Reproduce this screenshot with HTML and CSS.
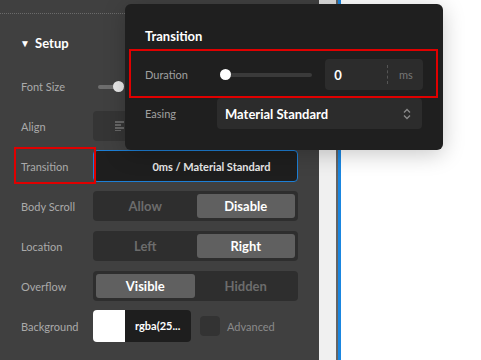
FILE: index.html
```html
<!DOCTYPE html>
<html lang="en">
  <head>
    <meta charset="UTF-8" />
    <title>Transition settings</title>
    <link rel="stylesheet" href="styles.css">
  </head>
  <body>
    <div class="stage">
      <aside class="panel">
        <div class="dots"></div>
        <div class="section-title"><span class="caret">&#9660;</span> Setup</div>

        <div class="row">
          <div class="label">Font Size</div>
          <div class="control">
            <div class="mini-slider"><span class="mini-track"></span><span class="mini-thumb"></span></div>
          </div>
        </div>

        <div class="row">
          <div class="label">Align</div>
          <div class="control box">
            <svg class="align-icon" width="10" height="10" viewBox="0 0 10 10">
              <path d="M0 1h9M0 4h6M0 7h9M0 10h6" stroke="#9a9a9a" stroke-width="1.2" fill="none"/>
            </svg>
          </div>
        </div>

        <div class="row">
          <div class="label">Transition</div>
          <div class="control field">0ms / Material Standard</div>
        </div>

        <div class="row">
          <div class="label">Body Scroll</div>
          <div class="control seg">
            <span class="opt">Allow</span>
            <span class="opt on">Disable</span>
          </div>
        </div>

        <div class="row">
          <div class="label">Location</div>
          <div class="control seg">
            <span class="opt">Left</span>
            <span class="opt on">Right</span>
          </div>
        </div>

        <div class="row">
          <div class="label">Overflow</div>
          <div class="control seg">
            <span class="opt on">Visible</span>
            <span class="opt">Hidden</span>
          </div>
        </div>

        <div class="row">
          <div class="label">Background</div>
          <div class="control color">
            <span class="swatch"></span>
            <span class="color-value">rgba(25...</span>
            <span class="check"></span>
            <span class="check-label">Advanced</span>
          </div>
        </div>

        <div class="mark mark-label"></div>
      </aside>
      <div class="strip"></div>
      <div class="edge"></div>
      <div class="accent"></div>
      <main class="canvas"></main>
    </div>

    <div class="popover">
      <div class="pop-title">Transition</div>
      <div class="pop-row">
        <div class="pop-label">Duration</div>
        <div class="slider"><span class="thumb"></span></div>
        <div class="num">
          <span class="num-value">0</span>
          <span class="num-unit">ms</span>
        </div>
      </div>
      <div class="pop-row">
        <div class="pop-label">Easing</div>
        <div class="select">
          <span>Material Standard</span>
          <svg width="10" height="12" viewBox="0 0 10 12">
            <path d="M2 4.5 5 1.5 8 4.5M2 7.5 5 10.5 8 7.5" stroke="#8a8a8a" stroke-width="1.3" fill="none"/>
          </svg>
        </div>
      </div>
      <div class="mark mark-duration"></div>
    </div>
  </body>
</html>
```

FILE: styles.css
```css
* {
  margin: 0;
  padding: 0;
  box-sizing: border-box;
}
body {
  width: 481px;
  height: 360px;
  overflow: hidden;
  background: #fff;
  font-family: Lato, "Noto Sans", sans-serif;
  position: relative;
}
.stage {
  display: flex;
  height: 360px;
}
/* left settings panel */
.panel {
  width: 319px;
  background: #404040;
  position: relative;
  padding-top: 13px;
}
.dots {
  border-top: 1px dotted #6a6a6a;
  margin-right: 160px;
}
.section-title {
  height: 28px;
  margin-top: 15px;
  margin-bottom: 9px;
  padding-left: 20px;
  color: #fff;
  font-weight: bold;
  font-size: 13px;
  line-height: 28px;
}
.caret {
  font-size: 10px;
  margin-right: 2px;
  vertical-align: 1px;
}
.row {
  display: flex;
  align-items: center;
  height: 40px;
}
.label {
  width: 93px;
  padding-left: 21px;
  font-size: 11px;
  color: #aaa;
}
.control {
  width: 205px;
  height: 30px;
}
.mini-slider {
  position: relative;
  height: 30px;
}
.mini-track {
  position: absolute;
  left: 5px;
  top: 14px;
  width: 20px;
  height: 4px;
  border-radius: 2px;
  background: #6e6e6e;
}
.mini-thumb {
  position: absolute;
  left: 20px;
  top: 10px;
  width: 11px;
  height: 11px;
  border-radius: 50%;
  background: #e8e8e8;
}
.box {
  background: #353535;
  border-radius: 4px;
  display: flex;
  align-items: center;
  padding-left: 22px;
}
.field {
  background: #1e1e1e;
  border: 1px solid #1d7fd6;
  border-radius: 4px;
  height: 32px;
  color: #e8e8e8;
  font-size: 11px;
  font-weight: bold;
  display: flex;
  align-items: center;
  justify-content: center;
  padding-left: 32px;
}
.seg {
  display: flex;
  gap: 2px;
  padding: 3px;
  background: #2e2e2e;
  border-radius: 4px;
}
.opt {
  flex: 1;
  display: flex;
  align-items: center;
  justify-content: center;
  border-radius: 3px;
  font-size: 13px;
  font-weight: bold;
  color: #6c6c6c;
}
.opt.on {
  background: #606060;
  color: #fff;
}
.color {
  display: flex;
  align-items: center;
  height: 32px;
}
.swatch {
  width: 32px;
  height: 32px;
  background: #fff;
  border-radius: 4px 0 0 4px;
}
.color-value {
  width: 66px;
  height: 32px;
  background: #1e1e1e;
  border-radius: 0 4px 4px 0;
  color: #fff;
  font-size: 11px;
  font-weight: bold;
  line-height: 32px;
  padding-left: 10px;
}
.check {
  width: 20px;
  height: 20px;
  margin-left: 9px;
  background: #333;
  border-radius: 4px;
}
.check-label {
  margin-left: 7px;
  font-size: 11px;
  color: #8a8a8a;
}
.strip {
  width: 17px;
  background: linear-gradient(#dcdcdc, #f0f0f0 90px);
}
.edge {
  width: 2px;
  background: #646464;
}
.accent {
  width: 3px;
  background: #1a86e0;
}
.canvas {
  flex: 1;
  background: #fff;
}
/* popover over the panel */
.popover {
  position: absolute;
  left: 125px;
  top: 4px;
  width: 318px;
  height: 146px;
  background: #1f1f1f;
  border-radius: 6px;
  box-shadow: 0 4px 22px rgba(0, 0, 0, 0.22);
  padding: 22px 20px 0 20px;
}
.pop-title {
  color: #fff;
  font-weight: bold;
  font-size: 13px;
  height: 20px;
  line-height: 20px;
}
.pop-row {
  display: flex;
  align-items: center;
  height: 39px;
}
.pop-row:nth-child(2) {
  margin-top: 9px;
}
.pop-label {
  width: 72px;
  font-size: 11px;
  color: #a0a0a0;
}
.slider {
  position: relative;
  width: 93px;
  height: 4px;
  margin-left: 3px;
  border-radius: 2px;
  background: #3a3a3a;
}
.thumb {
  position: absolute;
  left: 0;
  top: -4px;
  width: 11px;
  height: 11px;
  border-radius: 50%;
  background: #fff;
}
.num {
  margin-left: 13px;
  width: 98px;
  height: 31px;
  background: #2c2c2c;
  border-radius: 4px;
  display: flex;
  align-items: center;
}
.num-value {
  flex: 1;
  padding-left: 9px;
  color: #fff;
  font-size: 13px;
  font-weight: bold;
}
.num-unit {
  width: 36px;
  height: 19px;
  border-left: 1px dashed #555;
  color: #777;
  font-size: 11px;
  line-height: 19px;
  padding-left: 11px;
}
.select {
  width: 205px;
  height: 31px;
  background: #2c2c2c;
  border-radius: 4px;
  display: flex;
  align-items: center;
  justify-content: space-between;
  padding: 0 10px 0 8px;
  color: #fff;
  font-size: 13px;
  font-weight: bold;
}
/* red highlight annotations */
.mark {
  position: absolute;
  border: 2px solid #e00000;
}
.mark-label {
  left: 14px;
  top: 147px;
  width: 82px;
  height: 37px;
}
.mark-duration {
  left: 4px;
  top: 45px;
  width: 309px;
  height: 49px;
}
```
